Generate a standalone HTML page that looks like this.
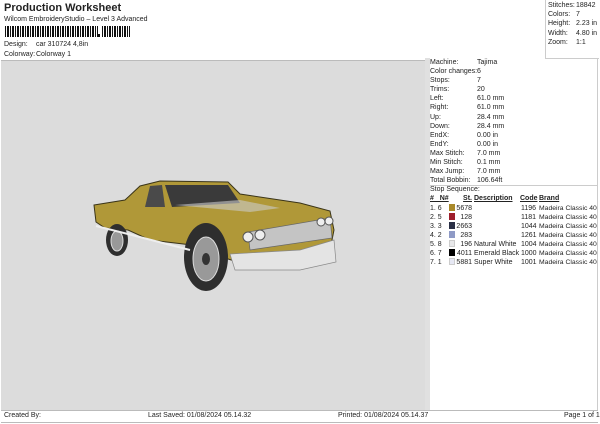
<!DOCTYPE html>
<html><head><style>
body{margin:0;width:600px;height:424px;background:#fff;font-family:"Liberation Sans",sans-serif;color:#222;position:relative;overflow:hidden}
.a{position:absolute;white-space:nowrap;font-size:7px;line-height:9px}
</style></head><body>
<div class="a" style="left:4px;top:2px;font-size:11px;font-weight:bold;line-height:13px">Production Worksheet</div>
<div class="a" style="left:4px;top:15px">Wilcom EmbroideryStudio – Level 3 Advanced</div>
<div style="position:absolute;left:5px;top:26px;width:93px;height:11px;background:repeating-linear-gradient(90deg,#111 0 1px,#fff 1px 2px,#111 2px 4px,#fff 4px 5px)"></div>
<div style="position:absolute;left:98px;top:34px;width:2px;height:3px;background:#111"></div>
<div style="position:absolute;left:102px;top:26px;width:28px;height:11px;background:repeating-linear-gradient(90deg,#111 0 1px,#fff 1px 2px,#111 2px 4px,#fff 4px 5px)"></div>
<div class="a" style="left:4px;top:40px">Design:</div><div class="a" style="left:36px;top:40px">car 310724 4,8in</div>
<div class="a" style="left:4px;top:50px">Colorway:</div><div class="a" style="left:36px;top:50px">Colorway 1</div>
<div style="position:absolute;left:1px;top:60px;width:424px;height:350px;background:#dcdcdc;border-top:1px solid #bbb"></div>
<div style="position:absolute;left:545px;top:0;width:53px;height:58px;border-left:1px solid #ccc;border-bottom:1px solid #ccc"></div>
<div style="position:absolute;left:425px;top:58px;width:173px;height:352px;border-left:5px solid #e0e0e0;border-right:1px solid #ccc;box-sizing:border-box"></div>
<div style="position:absolute;left:430px;top:185px;width:167px;height:1px;background:#ccc"></div>
<div class="a" style="left:548px;top:1px;line-height:9.2px">Stitches:<br>Colors:<br>Height:<br>Width:<br>Zoom:</div>
<div class="a" style="left:576px;top:1px;line-height:9.2px">18842<br>7<br>2.23 in<br>4.80 in<br>1:1</div>
<div class="a" style="left:430px;top:58px;line-height:9.1px">Machine:<br>Color changes:<br>Stops:<br>Trims:<br>Left:<br>Right:<br>Up:<br>Down:<br>EndX:<br>EndY:<br>Max Stitch:<br>Min Stitch:<br>Max Jump:<br>Total Bobbin:</div>
<div class="a" style="left:477px;top:58px;line-height:9.1px">Tajima<br>6<br>7<br>20<br>61.0 mm<br>61.0 mm<br>28.4 mm<br>28.4 mm<br>0.00 in<br>0.00 in<br>7.0 mm<br>0.1 mm<br>7.0 mm<br>106.64ft</div>
<div class="a" style="left:430px;top:185px">Stop Sequence:</div>
<div class="a" style="left:430px;top:194px;font-weight:bold;text-decoration:underline">#&nbsp;&nbsp; N#</div>
<div class="a" style="left:457px;top:194px;width:15px;text-align:right;font-weight:bold;text-decoration:underline">St.</div>
<div class="a" style="left:474px;top:194px;font-weight:bold;text-decoration:underline">Description</div>
<div class="a" style="left:520px;top:194px;font-weight:bold;text-decoration:underline">Code</div>
<div class="a" style="left:539px;top:194px;font-weight:bold;text-decoration:underline">Brand</div>
<div class="a" style="left:430px;top:203.5px;line-height:9px">1. 6<br>2. 5<br>3. 3<br>4. 2<br>5. 8<br>6. 7<br>7. 1</div>
<div style="position:absolute;left:449px;top:204px;width:6px;height:7px;background:#a9892a"></div>
<div style="position:absolute;left:449px;top:213px;width:6px;height:7px;background:#9e1e2c"></div>
<div style="position:absolute;left:449px;top:222px;width:6px;height:7px;background:#2a2f45"></div>
<div style="position:absolute;left:449px;top:231px;width:6px;height:7px;background:#8f9ac6"></div>
<div style="position:absolute;left:449px;top:240px;width:6px;height:7px;background:#e8e8ea;border:1px solid #ccc;box-sizing:border-box"></div>
<div style="position:absolute;left:449px;top:249px;width:6px;height:7px;background:#000"></div>
<div style="position:absolute;left:449px;top:258px;width:6px;height:7px;background:#e6e8f4;border:1px solid #ccc;box-sizing:border-box"></div>
<div class="a" style="left:452px;top:203.5px;width:20px;text-align:right;line-height:9px">5678<br>128<br>2663<br>283<br>196<br>4011<br>5881</div>
<div class="a" style="left:474px;top:203.5px;line-height:9px"><br><br><br><br>Natural White<br>Emerald Black<br>Super White</div>
<div class="a" style="left:521px;top:203.5px;line-height:9px">1196<br>1181<br>1044<br>1261<br>1004<br>1000<br>1001</div>
<div class="a" style="left:539px;top:203.5px;line-height:9px;font-size:6.8px">Madeira Classic 40<br>Madeira Classic 40<br>Madeira Classic 40<br>Madeira Classic 40<br>Madeira Classic 40<br>Madeira Classic 40<br>Madeira Classic 40</div>
<div style="position:absolute;left:1px;top:410px;width:597px;height:11px;border-top:1px solid #bbb;border-bottom:1px solid #bbb"></div>
<div class="a" style="left:4px;top:411px">Created By:</div>
<div class="a" style="left:148px;top:411px">Last Saved: 01/08/2024 05.14.32</div>
<div class="a" style="left:338px;top:411px">Printed: 01/08/2024 05.14.37</div>
<div class="a" style="left:564px;top:411px">Page 1 of 1</div>
<svg style="position:absolute;left:0;top:0" width="600" height="424">
<path d="M94,205 L125,200 L140,186 L160,181 L228,182 L240,194 L300,203 L330,211 L334,230 L330,250 L300,262 L250,266 L225,258 L200,246 L150,240 L128,230 L105,228 L96,222 Z" fill="#b09838" stroke="#3a3418" stroke-width="1"/>
<path d="M150,186 L162,185 L165,207 L145,207 Z" fill="#4a4a4a"/>
<path d="M165,185 L228,185 L240,203 L172,207 Z" fill="#3a3a3a"/>
<path d="M175,205 L240,200 L280,208 L250,212 Z" fill="#ccc" opacity=".6"/>
<path d="M230,254 L300,250 L334,240 L336,262 L300,270 L235,270 Z" fill="#e4e4e4" stroke="#888" stroke-width=".7"/>
<path d="M248,232 L330,218 L332,238 L250,250 Z" fill="#c4c4c4" stroke="#666" stroke-width=".7"/>
<circle cx="248" cy="237" r="5" fill="#eee" stroke="#555"/><circle cx="260" cy="235" r="5" fill="#eee" stroke="#555"/>
<circle cx="321" cy="222" r="4" fill="#eee" stroke="#555"/><circle cx="329" cy="221" r="4" fill="#eee" stroke="#555"/>
<ellipse cx="206" cy="257" rx="22" ry="34" fill="#2e2e2e"/>
<ellipse cx="206" cy="259" rx="13" ry="22" fill="#999" stroke="#ddd"/>
<ellipse cx="206" cy="259" rx="4" ry="6" fill="#333"/>
<ellipse cx="117" cy="240" rx="11" ry="16" fill="#2e2e2e"/>
<ellipse cx="117" cy="241" rx="6" ry="10" fill="#999" stroke="#ddd"/>
<path d="M96,226 L128,234 L190,250" stroke="#eee" stroke-width="2" fill="none"/>
</svg>
</body></html>
